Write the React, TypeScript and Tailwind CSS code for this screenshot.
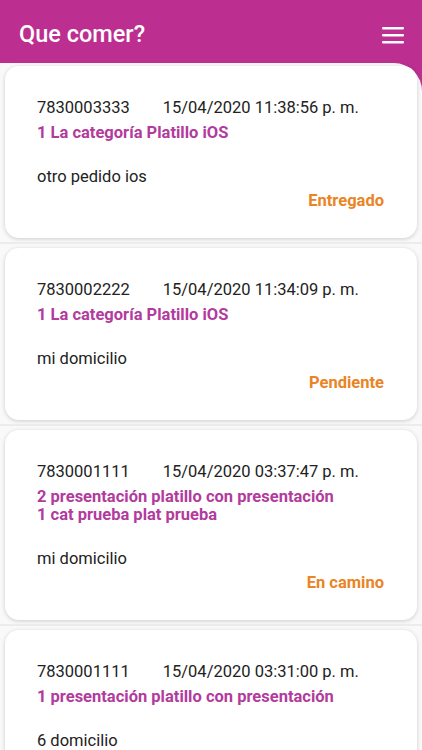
import { Fragment } from "react";

const orders = [
  {
    id: "7830003333",
    date: "15/04/2020 11:38:56 p. m.",
    items: ["1 La categoría Platillo iOS"],
    address: "otro pedido ios",
    status: "Entregado",
  },
  {
    id: "7830002222",
    date: "15/04/2020 11:34:09 p. m.",
    items: ["1 La categoría Platillo iOS"],
    address: "mi domicilio",
    status: "Pendiente",
  },
  {
    id: "7830001111",
    date: "15/04/2020 03:37:47 p. m.",
    items: ["2 presentación platillo con presentación", "1 cat prueba plat prueba"],
    address: "mi domicilio",
    status: "En camino",
  },
  {
    id: "7830001111",
    date: "15/04/2020 03:31:00 p. m.",
    items: ["1 presentación platillo con presentación"],
    address: "6 domicilio",
    status: "Entregado",
  },
];

function OrderCard({ order }: { order: (typeof orders)[0] }) {
  return (
    <div className="mx-[5px] rounded-[14px] bg-white pl-[32px] pr-[33px] pt-[32px] pb-[28px] shadow-[0_1px_4px_rgba(0,0,0,0.18)]">
      <div className="flex gap-[33px] text-[16.5px] leading-[20px] text-[#222]">
        <span>{order.id}</span>
        <span>{order.date}</span>
      </div>
      <div className="mt-[6px] text-[16.5px] font-bold leading-[18px] text-[#b23b9d]">
        {order.items.map((it, i) => (
          <div key={i}>{it}</div>
        ))}
      </div>
      <div className="mt-[25px] text-[16.5px] leading-[20px] text-[#222]">{order.address}</div>
      <div className="mt-[5px] text-right text-[16.5px] font-bold leading-[18px] text-[#ea8424]">{order.status}</div>
    </div>
  );
}

export default function App() {
  return (
    <div className="h-[750px] overflow-hidden bg-[#bc2e8f]" style={{ fontFamily: "Roboto, 'Noto Sans', sans-serif" }}>
      <header className="flex h-[63px] items-center justify-between pl-[19px] pr-[18px] pt-[7px]">
        <h1 className="text-[23.5px] font-medium text-white">Que comer?</h1>
        <svg width="22" height="18" viewBox="0 0 22 18" className="mt-[-1px]">
          <rect x="0" y="1" width="22" height="2.5" rx="1" fill="white" />
          <rect x="0" y="8" width="22" height="2.5" rx="1" fill="white" />
          <rect x="0" y="15" width="22" height="2.5" rx="1" fill="white" />
        </svg>
      </header>
      <main className="h-full rounded-tr-[28px] bg-[#f9f9f9] pt-[3px]">
        {orders.map((o, i) => (
          <Fragment key={i}>
            {i > 0 && (
              <div className="py-[4px]">
                <div className="h-[2px] bg-[#ececec]" />
              </div>
            )}
            <OrderCard order={o} />
          </Fragment>
        ))}
      </main>
    </div>
  );
}
